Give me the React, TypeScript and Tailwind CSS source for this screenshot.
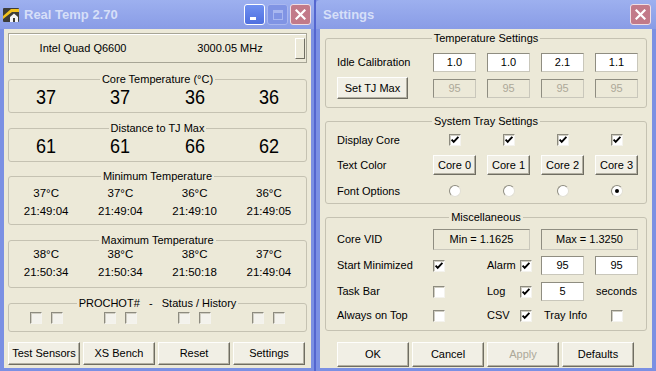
import React from "react";

type Kids = { children?: React.ReactNode; className?: string };

function Group({ title, className = "", children }: Kids & { title: string }) {
  return (
    <div className={`relative border border-[#c5c2b2] rounded-[3px] ${className}`}>
      <div className="absolute inset-x-0 -top-[8px] flex justify-center">
        <span className="bg-[#ece9d8] px-[2px] text-[11px] leading-[14px] whitespace-pre">{title}</span>
      </div>
      {children}
    </div>
  );
}

function Btn({ children, className = "", disabled = false }: Kids & { disabled?: boolean }) {
  return (
    <div
      className={`flex items-center justify-center bg-[#f1efe5] border border-t-[#fefefc] border-l-[#fefefc] border-r-[#6f6d62] border-b-[#6f6d62] shadow-[inset_-1px_-1px_0_#b3b0a2] text-[11px] leading-none whitespace-nowrap ${
        disabled ? "text-[#aca899]" : "text-black"
      } ${className}`}
    >
      {children}
    </div>
  );
}

function Check({ checked = false, disabled = false }: { checked?: boolean; disabled?: boolean }) {
  return (
    <div
      className={`w-[12px] h-[12px] shrink-0 border border-t-[#8d8b7f] border-l-[#8d8b7f] border-r-[#f4f3ee] border-b-[#f4f3ee] shadow-[inset_1px_1px_0_#d0cec3] flex items-center justify-center ${
        disabled ? "bg-[#f3f2ec]" : "bg-white"
      }`}
    >
      {checked && (
        <svg width="10" height="10" viewBox="0 0 10 10">
          <path d="M1.6 4.6 L3.7 6.8 L8.4 1.8" stroke="#000" strokeWidth="1.9" fill="none" />
        </svg>
      )}
    </div>
  );
}

function Radio({ checked = false }: { checked?: boolean }) {
  return (
    <div className="w-[12px] h-[12px] rounded-full bg-white border border-t-[#8d8b7f] border-l-[#8d8b7f] border-r-[#e2e0d5] border-b-[#e2e0d5] flex items-center justify-center">
      {checked && <div className="w-[4px] h-[4px] rounded-full bg-black" />}
    </div>
  );
}

function Field({ value, disabled = false, className = "w-[43px] h-[19px]" }: { value: string; disabled?: boolean; className?: string }) {
  return (
    <div
      className={`flex items-center justify-center border border-t-[#8f8d81] border-l-[#8f8d81] border-r-[#c9c7bb] border-b-[#c9c7bb] text-[11px] leading-none ${
        disabled ? "bg-[#ece9d8] text-[#aca899]" : "bg-white text-black"
      } ${className}`}
    >
      {value}
    </div>
  );
}

function AppIcon() {
  return (
    <svg width="16" height="16" viewBox="0 0 16 16">
      <rect x="0" y="1" width="16" height="14" rx="1" fill="#3d3c37" />
      <path d="M0 9 L8 2 L16 2 L16 5 L9 5 L0 12Z" fill="#f2c21e" />
      <path d="M7 10 L11 6.5 L15 10 L15 15 L7 15Z" fill="#f4f4f4" />
      <rect x="10" y="11" width="2" height="4" fill="#3d3c37" />
    </svg>
  );
}

function MinBtn() {
  return (
    <div className="w-[21px] h-[21px] rounded-[3px] border border-white bg-linear-to-b from-[#6f90f0] to-[#4f6fe0] flex items-end pl-[5px] pb-[4px]">
      <div className="w-[6px] h-[3px] bg-white" />
    </div>
  );
}

function MaxBtn() {
  return (
    <div className="w-[21px] h-[21px] rounded-[3px] border border-[#a9b7ef] bg-[#8094e4] flex items-center justify-center">
      <div className="w-[10px] h-[10px] border border-t-[3px] border-[#a8b7f0]" />
    </div>
  );
}

function CloseBtn() {
  return (
    <div className="w-[21px] h-[21px] rounded-[3px] border border-[#f0dfe4] bg-[#c27a89] flex items-center justify-center">
      <svg width="11" height="11" viewBox="0 0 11 11">
        <path d="M1.5 1.5 L9.5 9.5 M9.5 1.5 L1.5 9.5" stroke="#fff" strokeWidth="2.2" strokeLinecap="square" />
      </svg>
    </div>
  );
}

const big = ["37", "37", "36", "36"];
const dist = ["61", "61", "66", "62"];
const minT = [
  ["37°C", "21:49:04"],
  ["37°C", "21:49:04"],
  ["36°C", "21:49:10"],
  ["36°C", "21:49:05"],
];
const maxT = [
  ["38°C", "21:50:34"],
  ["38°C", "21:50:34"],
  ["38°C", "21:50:18"],
  ["37°C", "21:49:04"],
];

function LeftWindow() {
  return (
    <div className="w-[314px] h-full flex flex-col">
      <div className="h-[29px] shrink-0 flex items-center pl-[3px] pr-[3px] bg-linear-to-b from-[#9db0ef] to-[#899ce6]">
        <AppIcon />
        <span className="ml-[5px] text-[13px] font-bold text-[#d6dff8] leading-none">Real Temp 2.70</span>
        <div className="ml-auto flex gap-[2px]">
          <MinBtn />
          <MaxBtn />
          <CloseBtn />
        </div>
      </div>
      <div className="flex-1 flex flex-col bg-[#ece9d8] border-l-4 border-r-[3px] border-b-[3px] border-[#7b90e3] px-[4px]">
        <div className="mt-[4px] h-[30px] flex items-center border border-[#a7a596] shadow-[inset_1px_1px_0_#fff]">
          <div className="w-[148px] text-center">Intel Quad Q6600</div>
          <div className="ml-[8px] w-[130px] text-center">3000.05 MHz</div>
          <div className="w-[10px] h-[21px] bg-[#ece9d8] border border-t-white border-l-white border-r-[#716f64] border-b-[#716f64]" />
        </div>

        <Group title="Core Temperature (°C)" className="mt-[16px] h-[34px]">
          <div className="h-full grid grid-cols-4 items-center pt-[1px]">
            {big.map((v, i) => (
              <div key={i} className="text-center text-[20px] leading-none scale-x-90">
                {v}
              </div>
            ))}
          </div>
        </Group>

        <Group title="Distance to TJ Max" className="mt-[15px] h-[34px]">
          <div className="h-full grid grid-cols-4 items-center pt-[1px]">
            {dist.map((v, i) => (
              <div key={i} className="text-center text-[20px] leading-none scale-x-90">
                {v}
              </div>
            ))}
          </div>
        </Group>

        <Group title="Minimum Temperature" className="mt-[14px] h-[49px]">
          <div className="grid grid-cols-4 pt-[8px] gap-y-[2px]">
            {minT.map((v, i) => (
              <div key={"a" + i} className="text-center text-[11.5px] leading-[16px]">
                {v[0]}
              </div>
            ))}
            {minT.map((v, i) => (
              <div key={"b" + i} className="text-center text-[11.5px] leading-[16px]">
                {v[1]}
              </div>
            ))}
          </div>
        </Group>

        <Group title="Maximum Temperature" className="mt-[15px] h-[48px]">
          <div className="grid grid-cols-4 pt-[5px] gap-y-[2px]">
            {maxT.map((v, i) => (
              <div key={"a" + i} className="text-center text-[11.5px] leading-[16px]">
                {v[0]}
              </div>
            ))}
            {maxT.map((v, i) => (
              <div key={"b" + i} className="text-center text-[11.5px] leading-[16px]">
                {v[1]}
              </div>
            ))}
          </div>
        </Group>

        <Group title={"PROCHOT#   -   Status / History"} className="mt-[15px] h-[29px]">
          <div className="grid grid-cols-4 pt-[8px]">
            {[0, 1, 2, 3].map((i) => (
              <div key={i} className="flex justify-center gap-[9px]">
                <Check disabled />
                <Check disabled />
              </div>
            ))}
          </div>
        </Group>

        <div className="mt-[10px] flex justify-between pr-[2px]">
          <Btn className="w-[72px] h-[23px]">Test Sensors</Btn>
          <Btn className="w-[72px] h-[23px]">XS Bench</Btn>
          <Btn className="w-[72px] h-[23px]">Reset</Btn>
          <Btn className="w-[72px] h-[23px]">Settings</Btn>
        </div>
      </div>
    </div>
  );
}

function Row({ label, className = "", children }: Kids & { label?: React.ReactNode }) {
  return (
    <div className={`flex items-center pl-[11px] ${className}`}>
      <div className="w-[96px] shrink-0 whitespace-nowrap">{label}</div>
      {children}
    </div>
  );
}

function Cells({ children }: Kids) {
  return <div className="flex items-center gap-[11px]">{children}</div>;
}

function RightWindow() {
  return (
    <div className="w-[340px] h-full flex flex-col">
      <div className="h-[29px] shrink-0 flex items-center pl-[7px] pr-[5px] bg-linear-to-b from-[#9db0ef] to-[#899ce6] rounded-tl-[4px]">
        <span className="text-[13px] font-bold text-[#d6dff8] leading-none">Settings</span>
        <div className="ml-auto">
          <CloseBtn />
        </div>
      </div>
      <div className="flex-1 flex flex-col bg-[#ece9d8] border-l-4 border-r-4 border-b-[3px] border-[#7b90e3] pl-[5px] pr-[5px]">
        <Group title="Temperature Settings" className="mt-[9px] h-[70px]">
          <Row label="Idle Calibration" className="mt-[14px] h-[19px]">
            <Cells>
              <Field value="1.0" />
              <Field value="1.0" />
              <Field value="2.1" />
              <Field value="1.1" />
            </Cells>
          </Row>
          <Row label={<Btn className="w-[71px] h-[22px]">Set TJ Max</Btn>} className="mt-[5px] h-[22px]">
            <Cells>
              <Field value="95" disabled />
              <Field value="95" disabled />
              <Field value="95" disabled />
              <Field value="95" disabled />
            </Cells>
          </Row>
        </Group>

        <Group title="System Tray Settings" className="mt-[13px] h-[83px]">
          <Row label="Display Core" className="mt-[8px] h-[20px]">
            <Cells>
              {[0, 1, 2, 3].map((i) => (
                <div key={i} className="w-[43px] flex justify-center">
                  <Check checked />
                </div>
              ))}
            </Cells>
          </Row>
          <Row label="Text Color" className="mt-[5px] h-[20px]">
            <Cells>
              {["Core 0", "Core 1", "Core 2", "Core 3"].map((c) => (
                <Btn key={c} className="w-[43px] h-[20px]">
                  {c}
                </Btn>
              ))}
            </Cells>
          </Row>
          <Row label="Font Options" className="mt-[6px] h-[20px]">
            <Cells>
              {[0, 1, 2, 3].map((i) => (
                <div key={i} className="w-[43px] flex justify-center">
                  <Radio checked={i === 3} />
                </div>
              ))}
            </Cells>
          </Row>
        </Group>

        <Group title="Miscellaneous" className="mt-[13px] h-[114px]">
          <Row label="Core VID" className="mt-[11px] h-[21px]">
            <Cells>
              <Field value="Min = 1.1625" className="w-[97px] h-[21px] !bg-[#ece9d8]" />
              <Field value="Max = 1.3250" className="w-[97px] h-[21px] !bg-[#ece9d8]" />
            </Cells>
          </Row>
          <Row label="Start Minimized" className="mt-[6px] h-[19px]">
            <div className="w-[54px] flex">
              <Check checked />
            </div>
            <div className="w-[54px] flex items-center">
              <span className="w-[33px]">Alarm</span>
              <Check checked />
            </div>
            <Cells>
              <Field value="95" />
              <Field value="95" />
            </Cells>
          </Row>
          <Row label="Task Bar" className="mt-[7px] h-[19px]">
            <div className="w-[54px] flex">
              <Check />
            </div>
            <div className="w-[54px] flex items-center">
              <span className="w-[33px]">Log</span>
              <Check checked />
            </div>
            <Cells>
              <Field value="5" />
              <div className="w-[43px] text-center whitespace-nowrap">seconds</div>
            </Cells>
          </Row>
          <Row label="Always on Top" className="mt-[5px] h-[19px]">
            <div className="w-[54px] flex">
              <Check />
            </div>
            <div className="w-[54px] flex items-center">
              <span className="w-[33px]">CSV</span>
              <Check checked />
            </div>
            <Cells>
              <div className="w-[43px] pl-[3px] whitespace-nowrap">Tray Info</div>
              <div className="w-[43px] flex justify-center">
                <Check />
              </div>
            </Cells>
          </Row>
        </Group>

        <div className="mt-[11px] flex gap-[3px] pl-[12px]">
          <Btn className="w-[72px] h-[25px]">OK</Btn>
          <Btn className="w-[72px] h-[25px]">Cancel</Btn>
          <Btn className="w-[72px] h-[25px]" disabled>
            Apply
          </Btn>
          <Btn className="w-[72px] h-[25px]">Defaults</Btn>
        </div>
      </div>
    </div>
  );
}

export default function App() {
  return (
    <div className="w-[656px] h-[371px] flex overflow-hidden bg-[#7b90e3] font-['Liberation_Sans',Arial,sans-serif] text-[11px] text-black leading-[13px]">
      <LeftWindow />
      <div className="w-[2px] h-full bg-[#5466cf]" />
      <RightWindow />
    </div>
  );
}
